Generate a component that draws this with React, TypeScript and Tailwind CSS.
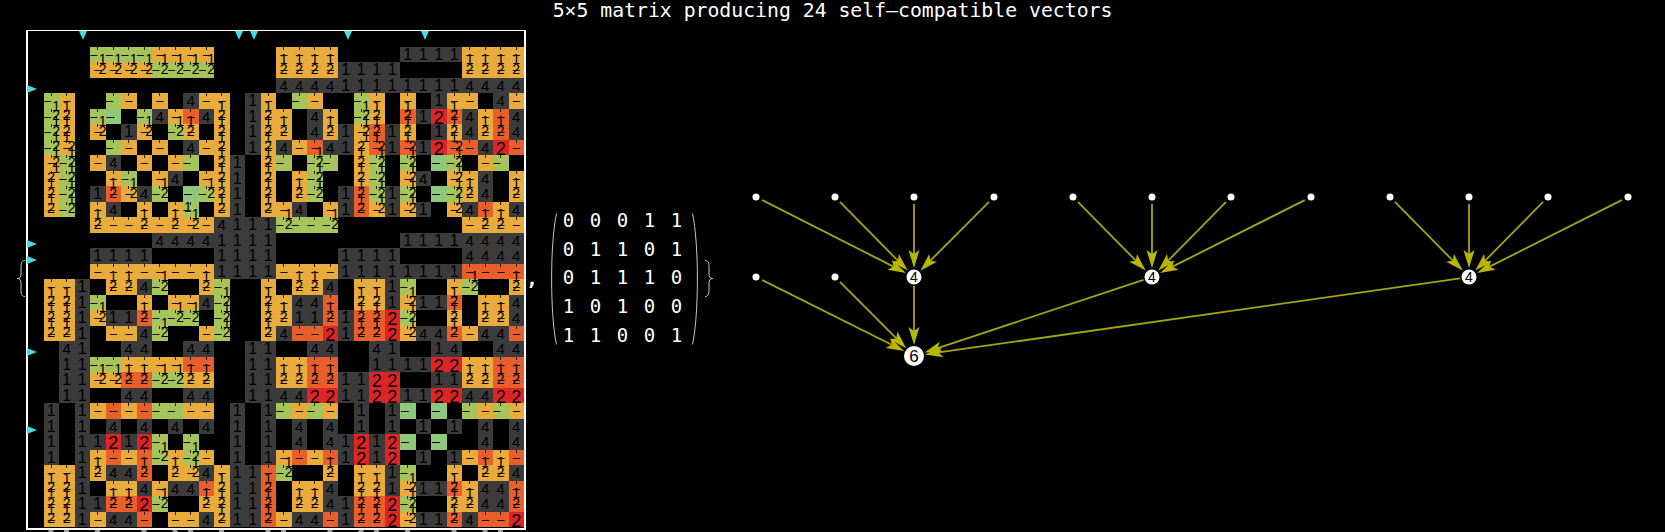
// k black, D dark with 1, d dark with 4, o orange, g green, l light green, r red-orange, R red
const BOARD = [
  'kkkk kkkk kkkk kkkk kkkk kkkk kkkk kkkk',
  'kkkk gggg oooo kkkk oooo kkkk DDDD oooo',
  'kkkk oooo gggg kkkk oooo DDDD kkkk oooo',
  'kkkk kkkk kkkk kkkk dddd DDDD DDDD dddd',
  'kgok kgok okdo okDo kgok kgok okDo okdo',
  'kgok glkg dord okDo okdo kgok rDRr dord',
  'kgok okDo kgok okDo okdo DorD okDo dord',
  'kgok kgok okdo okDo dord DorD rDRr rdRr',
  'kogk odko kogk oDko gkgg kogk gklg kogk',
  'kogk kogk odko oDko kogk kogk odko odko',
  'kogk Drod gklg oDko kogk DrgD gklg odko',
  'kogk odko kogk oDko odko DroD oDko drod',
  'kkkk oooo oooo dDDD gggg kkkk kkkk oooo',
  'kkkk kkkk dddd DDDD kkkk kkkk DDDD dddd',
  'kkkk DDDD kkkk DDDD kkkk DDDD kkkk dddd',
  'kkkk oooo oooo DDDD oooo DDDD DDDD rrrr',
  'kooD kood gkko gkko kood kooD gkko gkko',
  'kooD gkko kood gkko oddr kooD oDDr kood',
  'kooD oDDr gggk gkko oDDr DrrR gkko kood',
  'kooD kood gkko gkko drrR DrrR oddr oddr',
  'kkdD kkdd kkdd kkDD kkdd kkdD kkDd kkdd',
  'kkDD ggoo oorr kkDD oorr kkDD DDRR oorr',
  'kkDD oorr ggoo kkDD oorr DDRR kkDD oorr',
  'kkDD kkdd kkdd kkDD ddRR DDRR DDRR ddRR',
  'kDkD oror ggoo kDkD gogo kDkD lklk gogo',
  'kDkD kdkd kdkd kDkD kdkd kDkD kDkD kdkd',
  'kDkD DRDR gkgk kDkD kdkd DRDR lklk kdkd',
  'kDkD oror gogo kDkD oror DRDR kDkD oror',
  'kooD oddr kood oDDr gkko kooD gkko kood',
  'kooD kood oddr oDDr kood kooD oDDr oddr',
  'kooD DrrR gkko oDDr kood DrrR gkko oddr',
  'kooD oddr kood oDDr oddr DrrR oDDr drrR',
].map((r) => r.replaceAll(' ', ''))

const BG: Record<string, string> = {
  k: 'bg-black',
  D: 'bg-[#3b3b3b]',
  d: 'bg-[#3b3b3b]',
  o: 'bg-[#e8ab3c]',
  g: 'bg-[#a5c55b]',
  l: 'bg-[#8fc87a]',
  r: 'bg-[#e85f2b]',
  R: 'bg-[#dd2427]',
}

const MATRIX = [
  [0, 0, 0, 1, 1],
  [0, 1, 1, 0, 1],
  [0, 1, 1, 1, 0],
  [1, 0, 1, 0, 0],
  [1, 1, 0, 0, 1],
]

const DOWN_MARKS = [55, 211, 226, 320, 397]
const RIGHT_MARKS = [57, 212, 228, 320, 398]
// tops of the next row, showing under the frame
const BOTTOM_TICKS = [1, 2, 4, 7, 9, 10, 12, 15, 16, 19, 21, 22, 24, 27, 29, 30]

const TOP_Y = 197
const MID_Y = 277
const SINK = { x: 914, y: 356, r: 10 }
const HUBS = [
  { x: 914, sources: [756, 835, 914, 994] },
  { x: 1152, sources: [1073, 1152, 1231, 1311] },
  { x: 1469, sources: [1390, 1469, 1548, 1628] },
]

const isFilled = (c?: string) => c === 'o' || c === 'g' || c === 'r'

function Cell({ row, col }: { row: number; col: number }) {
  const c = BOARD[row][col]
  const above = BOARD[row - 1]?.[col]
  const below = BOARD[row + 1]?.[col]
  const stack = 'relative [grid-area:1/1] place-self-center leading-none text-black font-["Liberation_Sans",sans-serif]'

  if (c === 'k') return <div className={BG[c]} />
  if (c === 'D' || c === 'd')
    return (
      <div className={`grid ${BG[c]}`}>
        <span className={`${stack} ${c === 'D' ? 'text-[16px]' : 'text-[15px]'}`}>{c === 'D' ? '1' : '4'}</span>
      </div>
    )
  if (c === 'R')
    return (
      <div className={`grid ${BG[c]}`}>
        <span className={`${stack} text-[18px]`}>2</span>
      </div>
    )
  if (c === 'l')
    return (
      <div className={`grid ${BG[c]}`}>
        <span className={`${stack} text-[14px] left-[1px]`}>–1</span>
      </div>
    )

  const hasBelow = isFilled(below)
  const hasAbove = isFilled(above)
  const shifted = c === 'g' || (hasBelow && below === 'g') || (hasAbove && above === 'g')
  return (
    <div className={`grid ${BG[c]}`}>
      <span className="relative [grid-area:1/1] justify-self-center self-start h-[3px] w-px bg-[#222]" />
      <span className={`${stack} text-[13px] ${c === 'g' ? '-left-[4px]' : ''}`}>–</span>
      {hasBelow && (
        <span className={`${stack} text-[14px] top-[5px] ${shifted ? 'left-[5px]' : ''}`}>1</span>
      )}
      {hasAbove && (
        <span className={`${stack} text-[14px] -top-[1px] ${shifted ? 'left-[5px]' : ''}`}>2</span>
      )}
    </div>
  )
}

function Arrow({ x1, y1, x2, y2, from, to }: { x1: number; y1: number; x2: number; y2: number; from: number; to: number }) {
  const len = Math.hypot(x2 - x1, y2 - y1)
  const ux = (x2 - x1) / len
  const uy = (y2 - y1) / len
  const sx = x1 + ux * from
  const sy = y1 + uy * from
  const tx = x2 - ux * to
  const ty = y2 - uy * to
  const bx = tx - ux * 18
  const by = ty - uy * 18
  const nx = tx - ux * 14
  const ny = ty - uy * 14
  const pts = [
    [tx, ty],
    [bx - uy * 5.5, by + ux * 5.5],
    [nx, ny],
    [bx + uy * 5.5, by - ux * 5.5],
  ]
    .map((p) => p.join(','))
    .join(' ')
  return (
    <g>
      <line x1={sx} y1={sy} x2={nx} y2={ny} stroke="#a5a510" strokeWidth="1.8" />
      <polygon points={pts} fill="#b8b800" />
    </g>
  )
}

function Graph() {
  return (
    <svg width="945" height="180" viewBox="720 190 945 180" className="shrink-0">
      {HUBS.map((hub) =>
        hub.sources.map((x) => (
          <Arrow key={x} x1={x} y1={TOP_Y} x2={hub.x} y2={MID_Y} from={7} to={9} />
        ))
      )}
      {[756, 835].map((x) => (
        <Arrow key={x} x1={x} y1={MID_Y} x2={SINK.x} y2={SINK.y} from={7} to={11} />
      ))}
      {HUBS.map((hub) => (
        <Arrow key={hub.x} x1={hub.x} y1={MID_Y} x2={SINK.x} y2={SINK.y} from={9} to={11} />
      ))}
      {HUBS.flatMap((hub) => hub.sources).map((x) => (
        <circle key={x} cx={x} cy={TOP_Y} r="3.5" fill="#fff" />
      ))}
      {[756, 835].map((x) => (
        <circle key={x} cx={x} cy={MID_Y} r="3.5" fill="#fff" />
      ))}
      {HUBS.map((hub) => (
        <g key={hub.x}>
          <ellipse cx={hub.x} cy={MID_Y} rx="7.5" ry="7.5" fill="#fff" />
          <text x={hub.x} y={MID_Y + 5} textAnchor="middle" fontSize="14" fontFamily="Liberation Sans, sans-serif" fill="#000">
            4
          </text>
        </g>
      ))}
      <circle cx={SINK.x} cy={SINK.y} r={SINK.r} fill="#fff" />
      <text x={SINK.x} y={SINK.y + 6} textAnchor="middle" fontSize="17" fontFamily="Liberation Sans, sans-serif" fill="#000">
        6
      </text>
    </svg>
  )
}

function Brace({ flip }: { flip?: boolean }) {
  return (
    <svg width="8" height="37" viewBox="0 0 8 37" className={`shrink-0 ${flip ? '-scale-x-100' : ''}`}>
      <path
        d="M8 .5C4 .5 4 4 4 8v6c0 3-1 4.500-4 4.500 3 0 4 1.500 4 4.500v6c0 4 0 7.500 4 7.500"
        fill="none"
        stroke="#c4c4c4"
      />
    </svg>
  )
}

function Paren({ flip }: { flip?: boolean }) {
  return (
    <svg width="6" height="132" viewBox="0 0 6 132" className={`shrink-0 ${flip ? '-scale-x-100' : ''}`}>
      <path d="M5.500 .5C-1 30-1 102 5.500 131.500" fill="none" stroke="#c4c4c4" />
    </svg>
  )
}

export default function App() {
  return (
    <div className="h-[532px] w-[1665px] overflow-hidden bg-black text-white font-['DejaVu_Sans_Mono',monospace]">
      <h1 className="h-[30px] pt-px text-center text-[19.800px] leading-[20px] font-normal">
        5×5 matrix producing 24 self–compatible vectors
      </h1>

      <div className="flex items-start pl-[17px]">
        <div className="mt-[230px]">
          <Brace />
        </div>

        <div className="relative ml-px h-[500px] w-[500px] shrink-0 border-2 border-white">
          <div className="-mt-px grid grid-cols-[repeat(32,15.500px)] grid-rows-[repeat(32,15.500px)]">
            {BOARD.map((r, row) => r.split('').map((_, col) => <Cell key={`${row}-${col}`} row={row} col={col} />))}
          </div>
          <svg width="496" height="496" className="absolute left-0 top-0 overflow-visible">
            {DOWN_MARKS.map((x) => (
              <polygon key={x} points={`${x - 4},-1 ${x + 4},-1 ${x},8`} fill="#3fdde6" />
            ))}
            {RIGHT_MARKS.map((y) => (
              <polygon key={y} points={`-1,${y - 4} -1,${y + 4} 9,${y}`} fill="#3fdde6" />
            ))}
            {BOTTOM_TICKS.map((col) => (
              <rect key={col} x={col * 15.5 + 5} y="498" width="5" height="2" fill="#9a9a9a" />
            ))}
          </svg>
        </div>

        <span className="mt-[238px] w-[12px] shrink-0 text-[20px] leading-none font-bold">,</span>

        <div className="ml-[13px] flex">
          <div className="mt-[183px]">
            <Paren />
          </div>
          <div className="-ml-[2px] mt-[176px] grid grid-cols-[repeat(5,27px)] grid-rows-[repeat(5,28.700px)] place-items-center text-[19px] leading-none">
            {MATRIX.flat().map((v, i) => (
              <span key={i}>{v}</span>
            ))}
          </div>
          <div className="ml-[2px] mt-[183px]">
            <Paren flip />
          </div>
        </div>

        <div className="ml-[7px] mt-[230px]">
          <Brace flip />
        </div>

        <div className="ml-[7px] mt-[160px]">
          <Graph />
        </div>
      </div>
    </div>
  )
}
